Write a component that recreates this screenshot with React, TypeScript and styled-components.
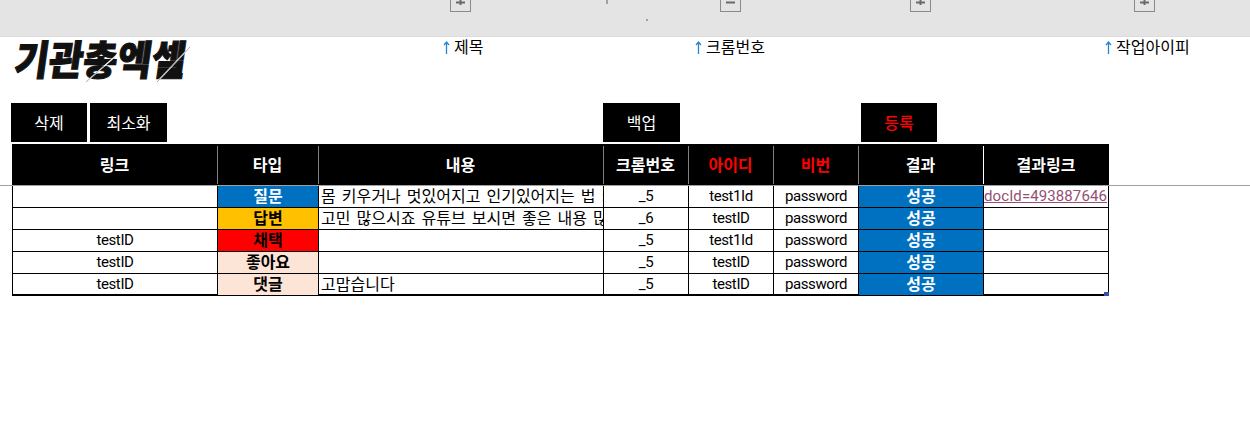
import React from 'react';
import styled, { createGlobalStyle } from 'styled-components';

const GlobalStyle = createGlobalStyle`
  html, body {
    margin : 0;
    padding : 0;
    background : #fff;
    overflow : hidden;
  }
  body {
    font-family : "Noto Sans CJK KR", "Noto Sans", sans-serif;
    font-size : 16px;
    color : #000;
  }
`

const B_Page = styled.div`
  width : 1250px;
  height : 422px;
`

// 엑셀 리본 아래쪽 회색 영역
const B_GroupBar = styled.div`
  height : 37px;
  box-sizing : border-box;
  background : #e4e4e4;
  border-bottom : 1px solid #dcdcdc;
  display : flex;
  align-items : flex-start;
`
const B_OutlineBtn = styled.div`
  width : 21px;
  height : 12px;
  box-sizing : border-box;
  margin-left : ${(props : {left : number}) => props.left}px;
  border : 1px solid #8a8a8a;
  border-top : 0;
  color : #6a6a6a;
  display : flex;
  justify-content : center;
`
const B_Tick = styled.div`
  width : 2px;
  height : 4px;
  margin-left : 135px;
  background : #a0a0a0;
`
const B_Dot = styled.div`
  width : 2px;
  height : 2px;
  margin : 19px 0 0 38px;
  background : #a0a0a0;
`

const B_Masthead = styled.div`
  height : 66px;
  display : grid;
  grid-template-columns : 443px 252px 410px 1fr;
  align-items : start;
`
const B_Logo = styled.div`
  position : relative;
  width : 175px;
  height : 46px;
  margin-left : 12px;
`
const B_LogoText = styled.div`
  font-weight : 900;
  font-size : 37px;
  line-height : 46px;
  letter-spacing : 0.2px;
  white-space : nowrap;
  transform : skewX(-8deg) scaleY(1.1);
  transform-origin : left bottom;
  -webkit-text-stroke : 1px #111;
  color : #111;
`
const B_LogoSlash = styled.svg`
  position : absolute;
  left : 0;
  top : 0;
  overflow : visible;
`
const B_ColLabel = styled.div`
  display : flex;
  align-items : flex-start;
  gap : 4px;
  height : 18px;
  line-height : 18px;
  white-space : nowrap;
`
const B_UpArrow = styled.svg`
  margin-top : 4px;
`

const B_Toolbar = styled.div`
  height : 39px;
  margin-bottom : 2px;
  display : flex;
`
const B_ToolBtn = styled.div`
  width : ${(props : {width : number, left : number, alert? : boolean}) => props.width}px;
  margin-left : ${(props) => props.left}px;
  padding-bottom : 2px;
  box-sizing : border-box;
  background : #000;
  color : ${(props) => props.alert ? '#ff0000' : '#fff'};
  font-weight : ${(props) => props.alert ? 500 : 400};
  display : flex;
  align-items : center;
  justify-content : center;
`

const COLUMNS = '205px 101px 285px 85px 85px 85px 125px 126px';

const B_HeadRow = styled.div`
  width : 1097px;
  height : 41px;
  margin-left : 12px;
  display : grid;
  grid-template-columns : ${COLUMNS};
  background : #000;
`
const B_HeadCell = styled.div`
  position : relative;
  display : flex;
  align-items : center;
  justify-content : center;
  padding-bottom : 2px;
  font-weight : 700;
  color : ${(props : {alert? : boolean}) => props.alert ? '#ff0000' : '#fff'};
  &::before {
    content : '';
    position : absolute;
    left : 0;
    top : 2px;
    bottom : 1px;
    width : 1px;
    background : ${(props : {alert? : boolean, first? : boolean, light? : boolean}) => props.first ? 'transparent' : props.light ? '#fff' : '#808080'};
  }
`
const B_FreezeLine = styled.div`
  height : 1px;
  background : #a0a0a0;
`
const B_Body = styled.div`
  position : relative;
  width : 1097px;
  margin-left : 12px;
  border-bottom : 1px solid #000;
`
const B_Row = styled.div`
  height : 22px;
  box-sizing : border-box;
  display : grid;
  grid-template-columns : ${COLUMNS};
  border-bottom : 1px solid #000;
  &:nth-last-child(2) { height : 21px; }
`
const B_Cell = styled.div`
  display : flex;
  align-items : center;
  justify-content : ${(props : {align? : string}) => props.align || 'center'};
  box-sizing : border-box;
  padding-bottom : 3px;
  line-height : 18px;
  border-left : 1px solid #000;
  white-space : nowrap;
  &:last-child { border-right : 1px solid #000; }
`
const B_LatinCell = styled(B_Cell)`
  font-family : Roboto, "Noto Sans", sans-serif;
  font-size : 15px;
  padding-bottom : 2px;
  line-height : 18px;
  letter-spacing : -0.4px;
`
const B_TypeCell = styled(B_Cell)`
  background : ${(props : {bg : string, fg : string}) => props.bg};
  color : ${(props) => props.fg};
  font-weight : 700;
`
const B_ResultCell = styled(B_Cell)`
  background : #0070c0;
  color : #fff;
  font-weight : 700;
`
const B_TextCell = styled(B_Cell)`
  padding-left : 2px;
  word-spacing : 2.5px;
  overflow : hidden;
`
const B_LinkCell = styled(B_LatinCell)`
  color : #954f72;
  text-decoration : underline;
  letter-spacing : 0.1px;
  padding-right : 1px;
  overflow : hidden;
`
const B_FillHandle = styled.div`
  position : absolute;
  right : 0;
  bottom : -1px;
  width : 5px;
  height : 4px;
  background : #3a50a8;
`

interface IRow {
  link : string
  type : string
  bg : string
  fg : string
  text : string
  chrome : string
  id : string
  result : string
}

const ROWS : IRow[] = [
  {link : '', type : '질문', bg : '#0070c0', fg : '#fff', text : '몸 키우거나 멋있어지고 인기있어지는 법 키', chrome : '_5', id : 'test1Id', result : '.docId=493887646'},
  {link : '', type : '답변', bg : '#ffc000', fg : '#000', text : '고민 많으시죠 유튜브 보시면 좋은 내용 많', chrome : '_6', id : 'testID', result : ''},
  {link : 'testID', type : '채택', bg : '#ff0000', fg : '#000', text : '', chrome : '_5', id : 'test1Id', result : ''},
  {link : 'testID', type : '좋아요', bg : '#fce4d6', fg : '#000', text : '', chrome : '_5', id : 'testID', result : ''},
  {link : 'testID', type : '댓글', bg : '#fce4d6', fg : '#000', text : '고맙습니다', chrome : '_5', id : 'testID', result : ''},
];

const HEADS = [
  {label : '링크', first : true},
  {label : '타입'},
  {label : '내용'},
  {label : '크롬번호'},
  {label : '아이디', alert : true},
  {label : '비번', alert : true},
  {label : '결과'},
  {label : '결과링크', light : true},
];

const PlusIcon = () => (
  <svg width="9" height="7" viewBox="0 0 9 7">
    <path d="M0 2.5H9M4.5 0V5" stroke="#6a6a6a" strokeWidth="2" fill="none" />
  </svg>
);

const MinusIcon = () => (
  <svg width="9" height="7" viewBox="0 0 9 7">
    <path d="M0 2.5H9" stroke="#6a6a6a" strokeWidth="2" fill="none" />
  </svg>
);

const UpArrow = () => (
  <B_UpArrow width="7" height="13" viewBox="0 0 7 13">
    <path d="M3.5 13V1M1 4L3.5 1L6 4" stroke="#2a84cf" strokeWidth="1.3" fill="none" />
  </B_UpArrow>
);

const App = () => {
  return (
    <B_Page>
      <GlobalStyle />
      <B_GroupBar>
        <B_OutlineBtn left={450}><PlusIcon /></B_OutlineBtn>
        <B_Tick />
        <B_Dot />
        <B_OutlineBtn left={72}><MinusIcon /></B_OutlineBtn>
        <B_OutlineBtn left={169}><PlusIcon /></B_OutlineBtn>
        <B_OutlineBtn left={203}><PlusIcon /></B_OutlineBtn>
      </B_GroupBar>

      <B_Masthead>
        <B_Logo>
          <B_LogoText>기관총엑셀</B_LogoText>
          <B_LogoSlash width="180" height="46" viewBox="0 0 180 46">
            <path d="M74 45L106 17M145 45L178 10" stroke="#fff" strokeWidth="1.2" fill="none" />
            <path d="M74 45L92 29M145 45L178 10" stroke="#555" strokeWidth="0.5" fill="none" />
          </B_LogoSlash>
        </B_Logo>
        <B_ColLabel><UpArrow />제목</B_ColLabel>
        <B_ColLabel><UpArrow />크롬번호</B_ColLabel>
        <B_ColLabel><UpArrow />작업아이피</B_ColLabel>
      </B_Masthead>

      <B_Toolbar>
        <B_ToolBtn width={76} left={11}>삭제</B_ToolBtn>
        <B_ToolBtn width={77} left={3}>최소화</B_ToolBtn>
        <B_ToolBtn width={77} left={436}>백업</B_ToolBtn>
        <B_ToolBtn width={76} left={181} alert>등록</B_ToolBtn>
      </B_Toolbar>

      <B_HeadRow>
        {HEADS.map((head, index) => (
          <B_HeadCell key={index + 'head'} alert={head.alert} first={head.first} light={head.light}>{head.label}</B_HeadCell>
        ))}
      </B_HeadRow>
      <B_FreezeLine />
      <B_Body>
        {ROWS.map((row, index) => (
          <B_Row key={index + 'row'}>
            <B_LatinCell>{row.link}</B_LatinCell>
            <B_TypeCell bg={row.bg} fg={row.fg}>{row.type}</B_TypeCell>
            <B_TextCell align="flex-start">{row.text}</B_TextCell>
            <B_LatinCell>{row.chrome}</B_LatinCell>
            <B_LatinCell>{row.id}</B_LatinCell>
            <B_LatinCell>password</B_LatinCell>
            <B_ResultCell>성공</B_ResultCell>
            <B_LinkCell align="flex-end">{row.result}</B_LinkCell>
          </B_Row>
        ))}
        <B_FillHandle />
      </B_Body>
    </B_Page>
  );
};

export default App;
